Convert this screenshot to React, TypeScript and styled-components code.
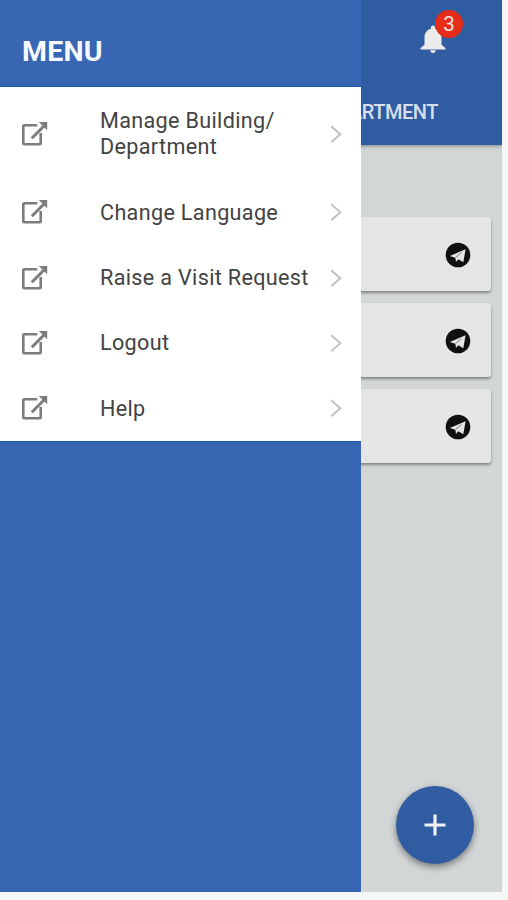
import React from "react";
import styled, { createGlobalStyle } from "styled-components";

const GlobalStyle = createGlobalStyle`
  * { box-sizing: border-box; }
  body {
    margin: 0;
    background: #f5f6f6;
    font-family: Roboto, "Liberation Sans", sans-serif;
    overflow: hidden;
  }
`;

const Screen = styled.div`
  position: relative;
  width: 502px;
  height: 892px;
  background: #d2d6d7;
  overflow: hidden;
`;

const AppBar = styled.header`
  height: 145px;
  display: flex;
  flex-direction: column;
  align-items: flex-end;
  background: #305ca2;
  box-shadow: 0 1px 4px rgba(0, 0, 0, 0.4);
`;

const ActionRow = styled.div`
  height: 79px;
  display: flex;
  align-items: center;
  padding: 0 52.5px 2px 0;
`;

const BellButton = styled.button`
  position: relative;
  display: flex;
  width: 34px;
  height: 34px;
  margin: 0;
  padding: 0;
  border: 0;
  background: none;
  color: #ebebeb;
`;

const Badge = styled.span`
  position: absolute;
  left: 19.5px;
  top: -11.5px;
  width: 28px;
  height: 28px;
  border-radius: 50%;
  background: #e52d19;
  color: #f3e6e4;
  font: 400 20.5px/28px Roboto, sans-serif;
  text-align: center;
`;

const TabLabel = styled.div`
  height: 66px;
  padding-right: 64px;
  font-size: 20px;
  font-weight: 500;
  line-height: 66px;
  letter-spacing: -0.45px;
  color: #d9e0ec;
  white-space: nowrap;
`;

const CardList = styled.main`
  display: flex;
  flex-direction: column;
  gap: 12px;
  padding: 72px 11px 0;
`;

const Card = styled.article`
  height: 74px;
  display: flex;
  align-items: center;
  justify-content: flex-end;
  padding: 2px 20px 0 0;
  border-radius: 3px;
  background: #e5e5e5;
  box-shadow: 0 2px 3px rgba(0, 0, 0, 0.38);
`;

const Fab = styled.button`
  position: absolute;
  right: 28px;
  bottom: 28px;
  width: 78px;
  height: 78px;
  display: flex;
  align-items: center;
  justify-content: center;
  padding: 0;
  border: 0;
  border-radius: 50%;
  background: #305ca2;
  color: #f2f2f2;
  box-shadow: 0 3px 7px rgba(0, 0, 0, 0.45);
`;

const Drawer = styled.aside`
  position: absolute;
  inset: 0 auto 0 0;
  width: 361px;
  background: #3866b2;
`;

const DrawerHeader = styled.h1`
  height: 87px;
  margin: 0;
  padding: 16px 0 0 22px;
  border-bottom: 1px solid #1b5aa9;
  color: #f6f9ff;
  font-size: 28.5px;
  font-weight: 700;
  line-height: 71px;
  letter-spacing: 0.2px;
`;

const Menu = styled.nav`
  display: flex;
  flex-direction: column;
  height: 354px;
  padding-top: 1px;
  background: #fff;
  box-shadow: 0 1px 0 #1b5aa9;
`;

const MenuItem = styled.a<{ $tall?: boolean }>`
  flex: ${(p) => (p.$tall ? "0 0 91.5px" : "1 1 0")};
  display: grid;
  grid-template-columns: 78px 1fr 12px;
  align-items: center;
  padding: 0 19px 0 22px;
  color: #434343;
`;

const ItemLabel = styled.span`
  padding-top: 1px;
  font-size: 21.6px;
  line-height: 26px;
  letter-spacing: 0.33px;
  white-space: pre-line;
`;

const OpenIcon = () => (
  <svg width="26" height="26" viewBox="0 0 26 26" fill="none" stroke="#7c7c7c" strokeWidth="2.6">
    <path d="M15.3 4.3H2.2Q1.3 4.3 1.3 5.2V22.3Q1.3 23.2 2.2 23.2H17.8Q18.7 23.2 18.7 22.3V12" />
    <path d="M9.8 17.2L22 5" strokeWidth="3" />
    <path d="M16.8 .9H25.2V9.2Z" fill="#7c7c7c" stroke="none" />
  </svg>
);

const ChevronIcon = () => (
  <svg width="12" height="18" viewBox="0 0 12 18" fill="none" stroke="#c2c2c2" strokeWidth="2">
    <path d="M1.2 1.2L10.3 9.2L1.2 17.2" />
  </svg>
);

const BellIcon = () => (
  <svg width="34" height="34" viewBox="0 0 24 24" fill="currentColor">
    <path d="M12 22c1.1 0 2-.9 2-2h-4c0 1.1.9 2 2 2zm6-6v-5c0-3.07-1.64-5.64-4.5-6.32V4c0-.83-.67-1.5-1.5-1.5s-1.5.67-1.5 1.5v.68C7.63 5.36 6 7.92 6 11v5l-2.8 2.4v1h17.6v-1L18 16z" />
  </svg>
);

const SendIcon = () => (
  <svg width="26" height="26" viewBox="0 0 26 26">
    <circle cx="13" cy="13" r="12.3" fill="#101010" />
    <path d="M4.8 14L20.6 7.2L18.3 20.2L13.5 17.2L11 19.7L10.3 15.7Z" fill="#e5e5e5" />
    <path d="M10.6 15.5L16.6 10.6" fill="none" stroke="#555" strokeWidth="0.7" />
  </svg>
);

const PlusIcon = () => (
  <svg width="22" height="22" viewBox="0 0 22 22" stroke="currentColor" strokeWidth="3.2">
    <path d="M11 .5V21.5M.5 11H21.5" />
  </svg>
);

const items = [
  "Manage Building/\nDepartment",
  "Change Language",
  "Raise a Visit Request",
  "Logout",
  "Help",
];

export default function App() {
  return (
    <>
      <GlobalStyle />
      <Screen>
        <AppBar>
          <ActionRow>
            <BellButton aria-label="Notifications">
              <BellIcon />
              <Badge>3</Badge>
            </BellButton>
          </ActionRow>
          <TabLabel>DEPARTMENT</TabLabel>
        </AppBar>
        <CardList>
          {[0, 1, 2].map((id) => (
            <Card key={id}>
              <SendIcon />
            </Card>
          ))}
        </CardList>
        <Fab aria-label="Add">
          <PlusIcon />
        </Fab>
        <Drawer>
          <DrawerHeader>MENU</DrawerHeader>
          <Menu>
            {items.map((label) => (
              <MenuItem key={label} $tall={label.includes("\n")}>
                <OpenIcon />
                <ItemLabel>{label}</ItemLabel>
                <ChevronIcon />
              </MenuItem>
            ))}
          </Menu>
        </Drawer>
      </Screen>
    </>
  );
}
